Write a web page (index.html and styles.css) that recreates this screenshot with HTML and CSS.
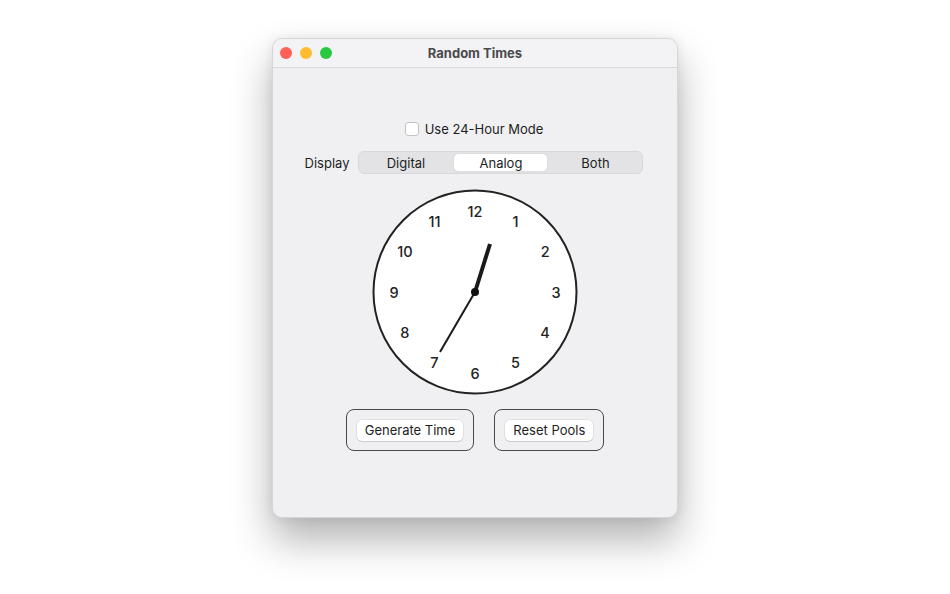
FILE: index.html
```html
<!DOCTYPE html>
<html lang="en">
<head>
    <meta charset="UTF-8">
    <title>Random Times</title>
    <link rel="stylesheet" href="styles.css">
</head>
<body>
    <div class="window">
        <div class="titlebar">
            <div class="lights">
                <span class="light red"></span>
                <span class="light yellow"></span>
                <span class="light green"></span>
            </div>
            <div class="title">Random Times</div>
        </div>
        <div class="content">
            <label class="check-row">
                <span class="checkbox"></span>
                <span>Use 24-Hour Mode</span>
            </label>
            <div class="display-row">
                <span class="display-label">Display</span>
                <div class="segmented">
                    <div class="segment">Digital</div>
                    <div class="segment active">Analog</div>
                    <div class="segment">Both</div>
                </div>
            </div>
            <svg class="clock" width="206" height="206" viewBox="0 0 206 206">
                <circle cx="103" cy="103" r="101.5" fill="#fff" stroke="#222" stroke-width="2"/>
                <g font-family="Inter, 'Noto Sans', sans-serif" font-size="14.5" font-weight="500" fill="#222" text-anchor="middle" dominant-baseline="central">
                    <text x="103" y="22">12</text>
                    <text x="143.5" y="32.9">1</text>
                    <text x="173.1" y="62.5">2</text>
                    <text x="184" y="103">3</text>
                    <text x="173.1" y="143.5">4</text>
                    <text x="143.5" y="173.1">5</text>
                    <text x="103" y="184">6</text>
                    <text x="62.5" y="173.1">7</text>
                    <text x="32.9" y="143.5">8</text>
                    <text x="22" y="103">9</text>
                    <text x="32.9" y="62.5">10</text>
                    <text x="62.5" y="32.9">11</text>
                </g>
                <line x1="103" y1="103" x2="118" y2="55" stroke="#1a1a1a" stroke-width="4"/>
                <line x1="103" y1="103" x2="68" y2="163" stroke="#1a1a1a" stroke-width="2"/>
                <circle cx="103" cy="103" r="4" fill="#111"/>
            </svg>
            <div class="actions">
                <div class="btn-frame">
                    <button class="btn">Generate Time</button>
                </div>
                <div class="btn-frame">
                    <button class="btn">Reset Pools</button>
                </div>
            </div>
        </div>
    </div>
</body>
</html>
```

FILE: styles.css
```css
body {
    margin: 0;
    min-height: 594px;
    padding-top: 38px;
    box-sizing: border-box;
    background: #fff;
    font-family: Inter, "Noto Sans", sans-serif;
    color: #1e1e1e;
}
.window {
    width: 406px;
    height: 480px;
    margin: 0 auto;
    background: #f0f0f2;
    border-radius: 10px;
    border: 1px solid #d6d6d8;
    box-sizing: border-box;
    box-shadow: 0 22px 40px rgba(0, 0, 0, 0.3), 0 0 12px rgba(0, 0, 0, 0.08);
    overflow: hidden;
}
.titlebar {
    height: 28px;
    border-bottom: 1px solid #d8d8da;
    display: flex;
    align-items: center;
    position: relative;
    background: #f3f3f5;
}
.lights {
    display: flex;
    gap: 8px;
    padding-left: 7px;
}
.light {
    width: 12px;
    height: 12px;
    border-radius: 50%;
}
.red { background: #fe5f57; }
.yellow { background: #febc2e; }
.green { background: #28c840; }
.title {
    position: absolute;
    left: 0;
    right: 0;
    text-align: center;
    font-size: 13px;
    font-weight: 700;
    color: #4a4a4c;
}
.content {
    display: flex;
    flex-direction: column;
    align-items: center;
    padding-top: 53px;
}
.check-row {
    display: flex;
    align-items: center;
    gap: 6px;
    font-size: 13px;
    height: 16px;
    margin-left: -2px;
}
.checkbox {
    width: 12px;
    height: 12px;
    border: 1px solid #c4c4c6;
    border-radius: 3px;
    background: #fff;
}
.display-row {
    display: flex;
    align-items: center;
    gap: 9px;
    margin-top: 14px;
    margin-left: -2px;
    font-size: 13px;
}
.segmented {
    display: flex;
    width: 285px;
    height: 23px;
    box-sizing: border-box;
    padding: 2px;
    background: #e3e3e5;
    border: 1px solid #d8d8da;
    border-radius: 6px;
}
.segment {
    flex: 1;
    text-align: center;
    line-height: 19px;
    font-size: 13px;
    border-radius: 4px;
}
.segment:first-child {
    text-indent: -4px;
}
.segment:last-child {
    text-indent: 3px;
}
.segment.active {
    background: #fff;
    box-shadow: 0 0 1px rgba(0, 0, 0, 0.25);
}
.clock {
    display: block;
    margin-top: 15px;
}
.actions {
    display: flex;
    gap: 20px;
    margin-top: 14px;
}
.btn-frame {
    height: 42px;
    box-sizing: border-box;
    border: 1px solid #4a4a4c;
    border-radius: 8px;
    padding: 0 10px;
    display: flex;
    align-items: center;
}
.btn {
    font-family: Inter, "Noto Sans", sans-serif;
    font-size: 13px;
    color: #1e1e1e;
    background: #fff;
    border: none;
    border-radius: 5px;
    height: 21px;
    padding: 0 8px;
    box-shadow: 0 0 0 0.5px rgba(0, 0, 0, 0.12), 0 1px 1px rgba(0, 0, 0, 0.1);
}
```
